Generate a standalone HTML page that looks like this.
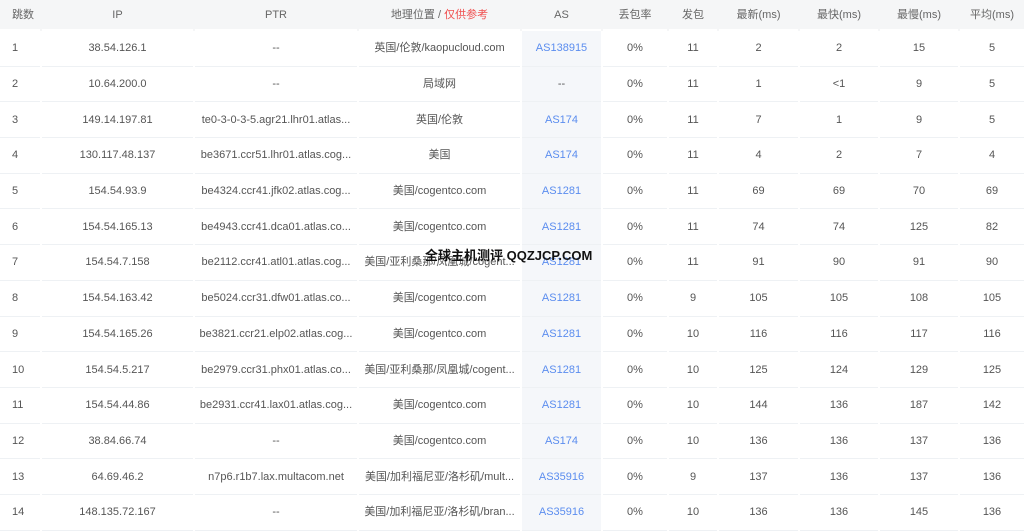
<!DOCTYPE html>
<html><head><meta charset="utf-8"><style>
*{margin:0;padding:0;box-sizing:border-box}
body{width:1024px;height:523px;overflow:hidden;background:#fff;font-family:"Liberation Sans","Noto Sans CJK SC",sans-serif;font-size:11px;color:#555}
.r{display:flex;height:35.7px;position:relative}
.h{height:31px;background:#f5f6f7}
.c{height:100%;display:flex;align-items:center;justify-content:center;border-bottom:1.5px solid #eef1f4;margin-right:2px;white-space:nowrap;overflow:hidden;line-height:14px}
.c span,.c{vertical-align:middle}
.h .c{border-bottom:2px solid #fff;color:#666}
.c:nth-child(1){width:40px;justify-content:flex-start;padding-left:12px}
.c:nth-child(2){width:151px}
.c:nth-child(3){width:162px}
.c:nth-child(4){width:161px}
.c:nth-child(5){width:79px}
.r:not(.h) .c:nth-child(5){background:#f5f7fa;color:#5b8def}
.c:nth-child(6){width:64px}
.c:nth-child(7){width:48px}
.c:nth-child(8){width:79px}
.c:nth-child(9){width:78px}
.c:nth-child(10){width:78px}
.c:nth-child(11){width:64px;margin-right:0}
.red{color:#f05050}
.wm{position:absolute;left:425px;top:248px;font-weight:bold;font-size:13px;line-height:16px;color:#111}
</style></head><body>
<div class="r h"><div class="c">跳数</div><div class="c">IP</div><div class="c">PTR</div><div class="c">地理位置 /&nbsp;<span class="red">仅供参考</span></div><div class="c">AS</div><div class="c">丢包率</div><div class="c">发包</div><div class="c">最新(ms)</div><div class="c">最快(ms)</div><div class="c">最慢(ms)</div><div class="c">平均(ms)</div></div>
<div class="r"><div class="c">1</div><div class="c">38.54.126.1</div><div class="c">--</div><div class="c">英国/伦敦/kaopucloud.com</div><div class="c">AS138915</div><div class="c">0%</div><div class="c">11</div><div class="c">2</div><div class="c">2</div><div class="c">15</div><div class="c">5</div></div>
<div class="r"><div class="c">2</div><div class="c">10.64.200.0</div><div class="c">--</div><div class="c">局域网</div><div class="c" style="color:#555">--</div><div class="c">0%</div><div class="c">11</div><div class="c">1</div><div class="c">&lt;1</div><div class="c">9</div><div class="c">5</div></div>
<div class="r"><div class="c">3</div><div class="c">149.14.197.81</div><div class="c">te0-3-0-3-5.agr21.lhr01.atlas...</div><div class="c">英国/伦敦</div><div class="c">AS174</div><div class="c">0%</div><div class="c">11</div><div class="c">7</div><div class="c">1</div><div class="c">9</div><div class="c">5</div></div>
<div class="r"><div class="c">4</div><div class="c">130.117.48.137</div><div class="c">be3671.ccr51.lhr01.atlas.cog...</div><div class="c">美国</div><div class="c">AS174</div><div class="c">0%</div><div class="c">11</div><div class="c">4</div><div class="c">2</div><div class="c">7</div><div class="c">4</div></div>
<div class="r"><div class="c">5</div><div class="c">154.54.93.9</div><div class="c">be4324.ccr41.jfk02.atlas.cog...</div><div class="c">美国/cogentco.com</div><div class="c">AS1281</div><div class="c">0%</div><div class="c">11</div><div class="c">69</div><div class="c">69</div><div class="c">70</div><div class="c">69</div></div>
<div class="r"><div class="c">6</div><div class="c">154.54.165.13</div><div class="c">be4943.ccr41.dca01.atlas.co...</div><div class="c">美国/cogentco.com</div><div class="c">AS1281</div><div class="c">0%</div><div class="c">11</div><div class="c">74</div><div class="c">74</div><div class="c">125</div><div class="c">82</div></div>
<div class="r"><div class="c">7</div><div class="c">154.54.7.158</div><div class="c">be2112.ccr41.atl01.atlas.cog...</div><div class="c">美国/亚利桑那/凤凰城/cogent...</div><div class="c">AS1281</div><div class="c">0%</div><div class="c">11</div><div class="c">91</div><div class="c">90</div><div class="c">91</div><div class="c">90</div></div>
<div class="r"><div class="c">8</div><div class="c">154.54.163.42</div><div class="c">be5024.ccr31.dfw01.atlas.co...</div><div class="c">美国/cogentco.com</div><div class="c">AS1281</div><div class="c">0%</div><div class="c">9</div><div class="c">105</div><div class="c">105</div><div class="c">108</div><div class="c">105</div></div>
<div class="r"><div class="c">9</div><div class="c">154.54.165.26</div><div class="c">be3821.ccr21.elp02.atlas.cog...</div><div class="c">美国/cogentco.com</div><div class="c">AS1281</div><div class="c">0%</div><div class="c">10</div><div class="c">116</div><div class="c">116</div><div class="c">117</div><div class="c">116</div></div>
<div class="r"><div class="c">10</div><div class="c">154.54.5.217</div><div class="c">be2979.ccr31.phx01.atlas.co...</div><div class="c">美国/亚利桑那/凤凰城/cogent...</div><div class="c">AS1281</div><div class="c">0%</div><div class="c">10</div><div class="c">125</div><div class="c">124</div><div class="c">129</div><div class="c">125</div></div>
<div class="r"><div class="c">11</div><div class="c">154.54.44.86</div><div class="c">be2931.ccr41.lax01.atlas.cog...</div><div class="c">美国/cogentco.com</div><div class="c">AS1281</div><div class="c">0%</div><div class="c">10</div><div class="c">144</div><div class="c">136</div><div class="c">187</div><div class="c">142</div></div>
<div class="r"><div class="c">12</div><div class="c">38.84.66.74</div><div class="c">--</div><div class="c">美国/cogentco.com</div><div class="c">AS174</div><div class="c">0%</div><div class="c">10</div><div class="c">136</div><div class="c">136</div><div class="c">137</div><div class="c">136</div></div>
<div class="r"><div class="c">13</div><div class="c">64.69.46.2</div><div class="c">n7p6.r1b7.lax.multacom.net</div><div class="c">美国/加利福尼亚/洛杉矶/mult...</div><div class="c">AS35916</div><div class="c">0%</div><div class="c">9</div><div class="c">137</div><div class="c">136</div><div class="c">137</div><div class="c">136</div></div>
<div class="r"><div class="c">14</div><div class="c">148.135.72.167</div><div class="c">--</div><div class="c">美国/加利福尼亚/洛杉矶/bran...</div><div class="c">AS35916</div><div class="c">0%</div><div class="c">10</div><div class="c">136</div><div class="c">136</div><div class="c">145</div><div class="c">136</div></div>
<div class="wm">全球主机测评 QQZJCP.COM</div>
</body></html>
